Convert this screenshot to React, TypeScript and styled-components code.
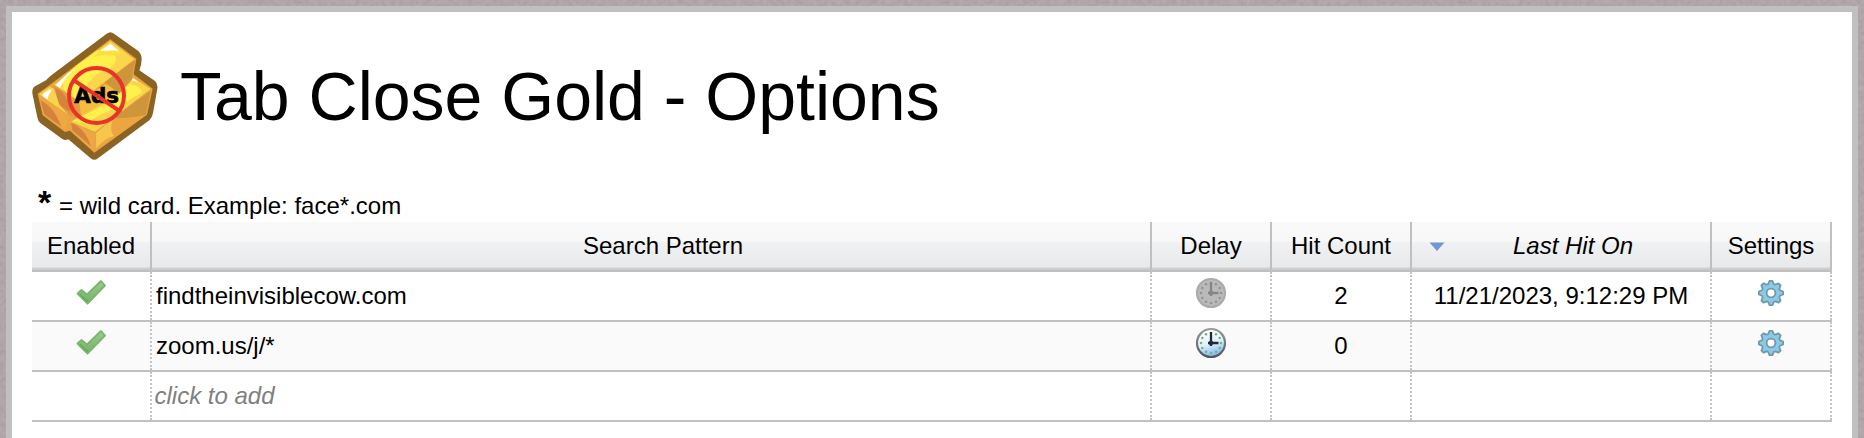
import React from "react";
import styled, { createGlobalStyle } from "styled-components";

const GlobalStyle = createGlobalStyle`
  *, *::before, *::after { box-sizing: border-box; }
  html, body { margin: 0; height: 100%; overflow: hidden; }
  body { background: #b0a6a9; font-family: "Liberation Sans", Arial, Helvetica, sans-serif; color: #000; }
  #root { height: 100%; }
`;

const Page = styled.div`
  position: relative;
  height: 438px;
  padding: 6px 6px 0;
  overflow: hidden;
`;

const Texture = styled.svg`
  position: absolute;
  inset: 0;
  width: 100%;
  height: 100%;
`;

const Panel = styled.main`
  position: relative;
  height: 460px;
  padding: 20px;
  border: 6px solid #c0c0c0;
  background: #fff;
`;

const Header = styled.header`
  display: flex;
  align-items: center;
  height: 129px;
`;

const Logo = styled.svg`
  flex: none;
  width: 126px;
  height: 129px;
`;

const Title = styled.h1`
  margin: 0 0 1px 22px;
  font-size: 68px;
  font-weight: 400;
  line-height: 80px;
  white-space: nowrap;
`;

const Hint = styled.p`
  display: flex;
  align-items: baseline;
  height: 38px;
  margin: 23px 0 0;
  padding-left: 6px;
  font-size: 24px;
  line-height: 36px;
  white-space: pre;
`;

const Star = styled.strong`
  width: 21px;
  font-size: 34px;
`;

const Grid = styled.div`
  width: 1800px;
`;

const Row = styled.div<{ $alt?: boolean }>`
  display: grid;
  grid-template-columns: 120px 1000px 120px 140px 300px 120px;
  height: 50px;
  border-bottom: 2px solid #c0c0c0;
  background: ${(p) => (p.$alt ? "#fafafa" : "#fff")};
`;

const HeadRow = styled(Row)`
  background: linear-gradient(
    #f9f9f9 0, #f8f8f8 19px, #f0f1f3 21px, #e8e9eb 45px, #d2d2d2 46px, #c8c8c8 48px
  );
`;

const HeadCell = styled.div<{ $sorted?: boolean; $indent?: number }>`
  display: flex;
  align-items: center;
  justify-content: center;
  padding: 0 0 0 ${(p) => p.$indent ?? 0}px;
  border-right: 2px solid #c0c0c0;
  font-size: 24px;
  font-style: ${(p) => (p.$sorted ? "italic" : "normal")};
  line-height: 48px;
  white-space: nowrap;
`;

const SortLabel = styled.span`
  flex: 1;
  padding-right: 9px;
  text-align: center;
`;

const Cell = styled.div<{ $left?: boolean; $placeholder?: boolean }>`
  display: flex;
  align-items: center;
  justify-content: ${(p) => (p.$left ? "flex-start" : "center")};
  padding-left: ${(p) => (p.$left ? (p.$placeholder ? "2.5px" : "4px") : "0")};
  border-right: 2px dotted #c4c4c4;
  color: ${(p) => (p.$placeholder ? "#808080" : "#000")};
  font-size: 24px;
  font-style: ${(p) => (p.$placeholder ? "italic" : "normal")};
  line-height: 46px;
  white-space: nowrap;
`;

const Icon = styled.svg`
  flex: none;
  width: 32px;
  height: 32px;
  margin-bottom: 6px;
`;

const SortArrow = styled.svg`
  flex: none;
  width: 16px;
  height: 10px;
  margin: 2px 0 0 -7px;
`;

function GoldLogo() {
  return (
    <Logo viewBox="96 96 378 387" role="img" aria-label="Gold bars with a no-ads sign">
      <path fill="#8b6424" d="M320 101Q331 92 342 101L415 153Q425 162 425 178Q425 195 418 211L465 243Q474 250 472 266L459 340Q456 354 448 361L294 475Q283 484 272 475L211 423L205 418Q195 422 187 417L121 369Q114 364 112 352L98 285Q94 266 105 259L138 241Q145 233 152 227Z" />
      <path fill="#eba340" d="M331 118L409 176L401 223L458 266L441 344L283 458L210 392L195 396L128 346L113 281L152 253Z" />
      <path fill="#fbd64d" d="M331 123L403 178L240 303L162 254Z" />
      <path fill="#fff04c" d="M292 151L347 168Q352 200 311 213Q270 224 236 303L199 278Q169 248 230 196Z" />
      <path fill="#fce13b" d="M313 137L379 163Q347 160 281 171Z" />
      <path fill="#fff" d="M331 131L357 152Q332 150 300 153ZM204 219L226 206Q188 237 181 265L167 255Z" />
      <path fill="#cf953a" d="M406 179L392 252L359 280L314 247Z" />
      <path fill="#f4bd42" d="M318 253L359 280L245 348L236 303Z" />
      <path fill="#e8983f" d="M159 256L237 305L242 355Q207 350 179 320Z" />
      <path fill="#d5843c" d="M165 264Q199 275 212 335Q183 322 176 309Z" />
      <path fill="#f7d44b" d="M117 283L149 260L162 266L177 313L204 343L183 329Z" />
      <path fill="#fff" d="M130 280L150 268L155 273Q144 284 143 299L127 287Z" />
      <path fill="#efa744" d="M117 289L184 332L207 350L196 393L131 344Z" />
      <path fill="#d5823c" d="M121 301Q161 319 184 380L133 343Z" />
      <path fill="#f8d64c" d="M400 234L452 267L285 395L213 365L244 348L359 280Z" />
      <path fill="#fff04c" d="M390 253Q428 261 424 280Q394 294 356 323Q305 335 260 371L218 362L327 310Z" />
      <path fill="#fff" d="M399 234L414 246L395 241Z" />
      <path fill="#cf953a" d="M452 272L437 345Q377 357 340 354Z" />
      <path fill="#eba543" d="M340 354Q379 357 438 345L285 454V398Z" />
      <path fill="#f7c74d" d="M288 400L339 356Q326 391 342 408Q313 414 289 445Z" />
      <path fill="#eda845" d="M211 366L283 401L282 454L215 392Z" />
      <path fill="#d5823c" d="M213 369Q254 382 273 439L217 391Z" />
      <text x="290" y="310" textAnchor="middle" fontFamily="DejaVu Sans" fontSize="63" fontWeight="700" stroke="#000" strokeWidth="2" textLength="134" lengthAdjust="spacingAndGlyphs">Ads</text>
      <circle cx="289.5" cy="286.5" r="82.5" fill="none" stroke="#e9332a" strokeWidth="12" />
      <path d="M222 241L357 332" stroke="#e9332a" strokeWidth="12" />
    </Logo>
  );
}

function CheckIcon() {
  return (
    <Icon viewBox="0 0.5 32 32" aria-label="Enabled">
      <defs>
        <linearGradient id="check-fill" x1="0" y1="0" x2="0" y2="1">
          <stop offset="0" stopColor="#9ccc8d" />
          <stop offset="1" stopColor="#6fb463" />
        </linearGradient>
      </defs>
      <path d="M2.5 17L6.5 13.5L12 18L26 4.5L30 9L12.5 27Z" fill="url(#check-fill)" stroke="#7ab56d" strokeWidth="1.8" strokeLinejoin="round" />
      <path d="M5 17.5L12 24.5L13 24.5" fill="none" stroke="#5a9b50" strokeWidth="1.4" opacity=".55" />
    </Icon>
  );
}

function ClockIcon({ active }: { active: boolean }) {
  const dots = Array.from({ length: 12 }, (_, i) => {
    const angle = (i * Math.PI) / 6;
    return <circle key={i} cx={16 + 10 * Math.sin(angle)} cy={16 - 10 * Math.cos(angle)} r="1.25" fill={active ? "#74b56b" : "#929292"} />;
  });
  return (
    <Icon viewBox="0 0 32 32" aria-label={active ? "Delayed" : "No delay"}>
      <defs>
        <linearGradient id="clock-face" x1="0" y1="0" x2=".3" y2="1">
          <stop offset=".15" stopColor="#fff" />
          <stop offset=".6" stopColor="#def2fe" />
          <stop offset="1" stopColor="#8abcf0" />
        </linearGradient>
        <linearGradient id="clock-rim" x1="0" y1="0" x2="0" y2="1">
          <stop offset="0" stopColor="#9a9a9a" />
          <stop offset="1" stopColor="#4f5564" />
        </linearGradient>
      </defs>
      <circle cx="16" cy="16" r="14" fill={active ? "url(#clock-face)" : "#bababa"} stroke={active ? "url(#clock-rim)" : "#ababab"} strokeWidth="2.2" />
      {dots}
      <path d="M16 5V19M13 16H23.5" stroke={active ? "#222a30" : "#858585"} strokeWidth="2.3" />
      <circle cx="16" cy="16" r="2.2" fill={active ? "#222a30" : "#858585"} />
    </Icon>
  );
}

function GearIcon() {
  const teeth = Array.from({ length: 8 }, (_, i) => {
    const point = (radius: number, degrees: number) => {
      const angle = ((i * 45 + degrees) * Math.PI) / 180;
      return `${(16 + radius * Math.sin(angle)).toFixed(2)} ${(16 - radius * Math.cos(angle)).toFixed(2)}`;
    };
    return `${i ? "L" : "M"}${point(9.4, -17)}L${point(12.2, -7)}L${point(12.2, 7)}L${point(9.4, 17)}`;
  }).join("");
  return (
    <Icon viewBox="0 0 32 32" aria-label="Settings">
      <path d={`${teeth}Z`} fill="#88cbe7" stroke="#7598a8" strokeWidth="1.8" strokeLinejoin="round" />
      <circle cx="16" cy="16" r="4.4" fill="#fff" stroke="#7899a7" strokeWidth="1.9" />
    </Icon>
  );
}

const rules = [
  { pattern: "findtheinvisiblecow.com", delayed: false, hits: 2, lastHit: "11/21/2023, 9:12:29 PM" },
  { pattern: "zoom.us/j/*", delayed: true, hits: 0, lastHit: "" },
];

export default function App() {
  return (
    <>
      <GlobalStyle />
      <Page>
        <Texture aria-hidden="true">
          <filter id="grain" x="0" y="0" width="100%" height="100%">
            <feTurbulence type="fractalNoise" baseFrequency="0.22" numOctaves="2" seed="4" />
            <feColorMatrix values=".12 0 0 0 .602  .12 0 0 0 .562  .12 0 0 0 .575  0 0 0 0 1" colorInterpolationFilters="sRGB" />
          </filter>
          <rect width="100%" height="100%" filter="url(#grain)" />
        </Texture>
        <Panel>
          <Header>
            <GoldLogo />
            <Title>Tab Close Gold - Options</Title>
          </Header>
          <Hint>
            <Star>*</Star>
            <span>= wild card. Example: face*.com</span>
          </Hint>
          <Grid>
            <HeadRow>
              <HeadCell>Enabled</HeadCell>
              <HeadCell $indent={24}>Search Pattern</HeadCell>
              <HeadCell>Delay</HeadCell>
              <HeadCell>Hit Count</HeadCell>
              <HeadCell $sorted $indent={24}>
                <SortArrow viewBox="0 0 16 10">
                  <path d="M.5 .5H15.5L8 9Z" fill="#7096d5" />
                </SortArrow>
                <SortLabel>Last Hit On</SortLabel>
              </HeadCell>
              <HeadCell>Settings</HeadCell>
            </HeadRow>
            {rules.map((rule, i) => (
              <Row key={rule.pattern} $alt={i % 2 === 1}>
                <Cell><CheckIcon /></Cell>
                <Cell $left>{rule.pattern}</Cell>
                <Cell><ClockIcon active={rule.delayed} /></Cell>
                <Cell>{rule.hits}</Cell>
                <Cell>{rule.lastHit}</Cell>
                <Cell><GearIcon /></Cell>
              </Row>
            ))}
            <Row>
              <Cell />
              <Cell $left $placeholder>click to add</Cell>
              <Cell />
              <Cell />
              <Cell />
              <Cell />
            </Row>
          </Grid>
        </Panel>
      </Page>
    </>
  );
}
